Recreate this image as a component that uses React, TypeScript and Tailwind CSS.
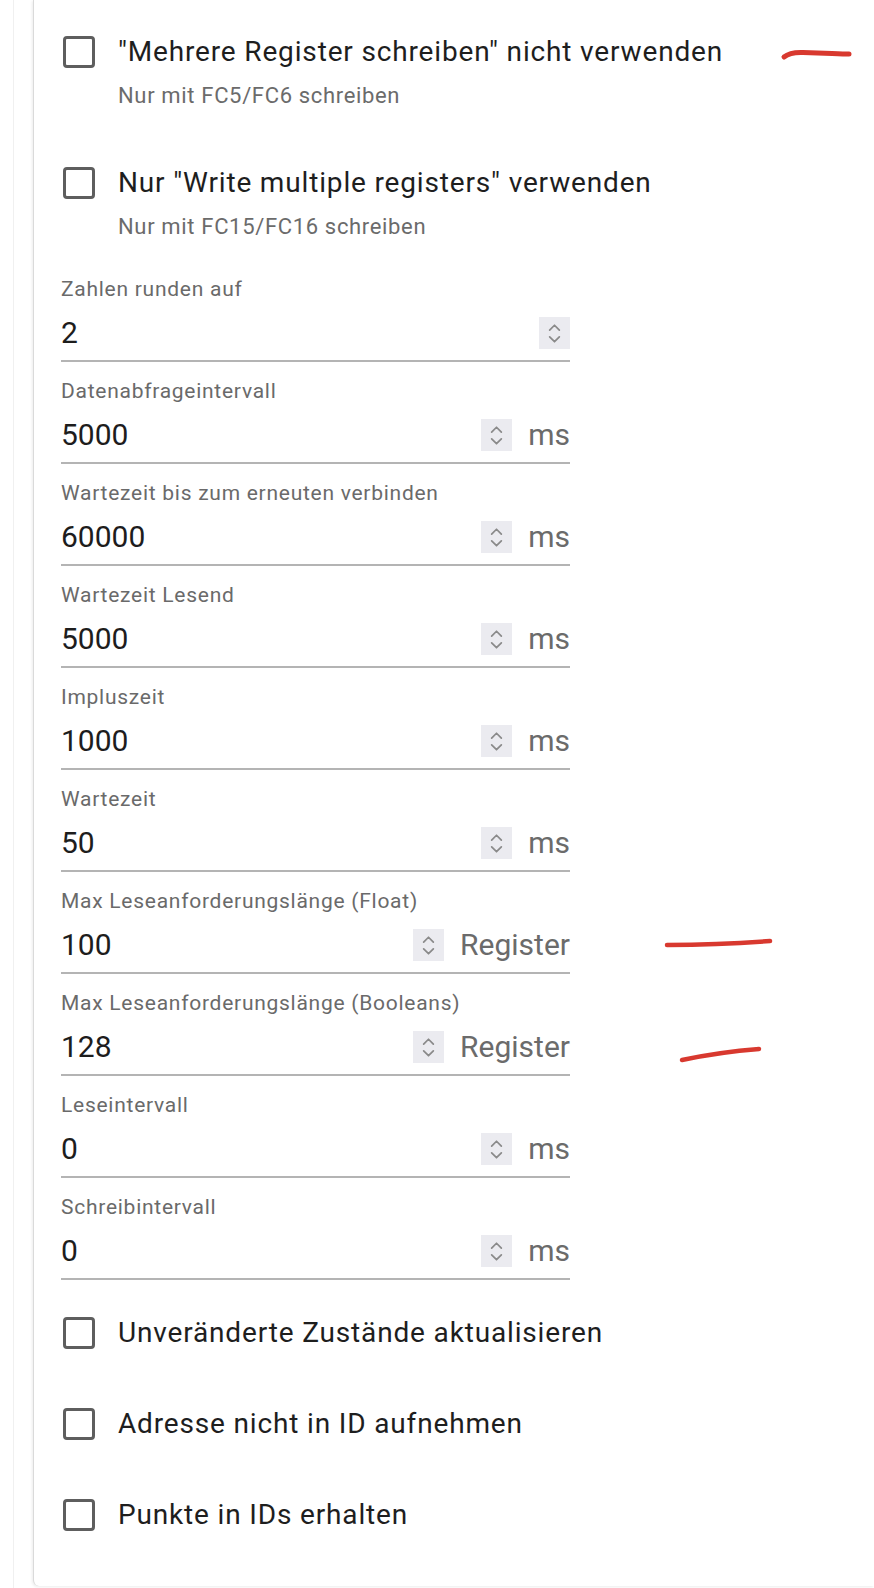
import { useState } from "react";

type Field = { label: string; value: string; unit?: string };

const FIELDS: Field[] = [
  { label: "Zahlen runden auf", value: "2" },
  { label: "Datenabfrageintervall", value: "5000", unit: "ms" },
  { label: "Wartezeit bis zum erneuten verbinden", value: "60000", unit: "ms" },
  { label: "Wartezeit Lesend", value: "5000", unit: "ms" },
  { label: "Impluszeit", value: "1000", unit: "ms" },
  { label: "Wartezeit", value: "50", unit: "ms" },
  { label: "Max Leseanforderungslänge (Float)", value: "100", unit: "Register" },
  { label: "Max Leseanforderungslänge (Booleans)", value: "128", unit: "Register" },
  { label: "Leseintervall", value: "0", unit: "ms" },
  { label: "Schreibintervall", value: "0", unit: "ms" },
];

function Box({ checked, onClick }: { checked: boolean; onClick: () => void }) {
  return (
    <button
      type="button"
      onClick={onClick}
      className="ml-[2px] flex h-[32px] w-[32px] shrink-0 items-center justify-center rounded-[4px] border-[3px] border-[#5e5e5e]"
    >
      {checked && (
        <svg width="22" height="22" viewBox="0 0 24 24" fill="none" stroke="#5e5e5e" strokeWidth="3">
          <path d="M5 12l5 5 9-10" />
        </svg>
      )}
    </button>
  );
}

function CheckRow({ label, hint, className = "" }: { label: string; hint?: string; className?: string }) {
  const [checked, setChecked] = useState(false);
  return (
    <div className={className}>
      <div className="flex items-center gap-[23px]">
        <Box checked={checked} onClick={() => setChecked(!checked)} />
        <span className="text-[28px] leading-[34px] tracking-[0.03em] text-[#1e1e1e]">{label}</span>
      </div>
      {hint && (
        <div className="mt-[14px] pl-[57px] text-[22px] leading-[26px] tracking-[0.03em] text-[#6b6b6b]">
          {hint}
        </div>
      )}
    </div>
  );
}

function Spinner() {
  return (
    <span className="flex h-[32px] w-[31px] shrink-0 items-center justify-center bg-[#ebebf0]">
      <svg width="31" height="32" viewBox="0 0 32 32" fill="none" stroke="#8a8a8a" strokeWidth="1.8" strokeLinecap="round" strokeLinejoin="round">
        <path d="M11 13l5-5 5 5" />
        <path d="M11 20l5 5 5-5" />
      </svg>
    </span>
  );
}

function NumberField({ field }: { field: Field }) {
  const [value, setValue] = useState(field.value);
  return (
    <div className="w-[509px] border-b-2 border-[#b4b4b4] pt-[17px] pb-[9px]">
      <div className="text-[21px] leading-[24px] tracking-[0.035em] text-[#6a6a6a]">{field.label}</div>
      <div className="mt-[14px] flex h-[36px] items-center">
        <input
          value={value}
          onChange={(e) => setValue(e.target.value)}
          className="h-[36px] min-w-0 flex-1 bg-transparent text-[30px] leading-[36px] text-[#1d1d1d] outline-none"
        />
        <Spinner />
        {field.unit && (
          <span className="ml-[16px] text-[30px] leading-[36px] text-[#6b6b6b]">{field.unit}</span>
        )}
      </div>
    </div>
  );
}

export default function App() {
  return (
    <div className="relative h-[1588px] w-[874px] overflow-hidden bg-white font-['Roboto','Liberation_Sans',sans-serif]">
      <div className="ml-[13px] h-full border-l border-[#f0f0f0] pl-[19px]">
        <div className="h-[1586px] rounded-bl-[6px] border-l border-[#dadada] bg-white pl-[27px] shadow-[-1px_1px_3px_rgba(0,0,0,0.08)]">
          <div className="pt-[35px]">
            <CheckRow label={'"Mehrere Register schreiben" nicht verwenden'} hint="Nur mit FC5/FC6 schreiben" />
            <CheckRow
              className="mt-[57px]"
              label={'Nur "Write multiple registers" verwenden'}
              hint="Nur mit FC15/FC16 schreiben"
            />
          </div>

          <div className="mt-[20px]">
            {FIELDS.map((f) => (
              <NumberField key={f.label} field={f} />
            ))}
          </div>

          <div className="flex flex-col gap-[57px] pt-[36px]">
            <CheckRow label="Unveränderte Zustände aktualisieren" />
            <CheckRow label="Adresse nicht in ID aufnehmen" />
            <CheckRow label="Punkte in IDs erhalten" />
          </div>
        </div>
      </div>

      {/* red hand-drawn marks on top of the screenshot */}
      <svg
        className="pointer-events-none absolute left-0 top-0"
        width="874"
        height="1588"
        viewBox="0 0 874 1588"
        fill="none"
        stroke="#d8392f"
        strokeLinecap="round"
      >
        <path d="M784 57 Q790 52 803 52.5 L832 53.5 Q845 54 849 54" strokeWidth="5" />
        <path d="M667 945 Q720 944.5 770 941" strokeWidth="4.5" />
        <path d="M682 1060 Q720 1052 759 1049" strokeWidth="4.5" />
      </svg>
    </div>
  );
}
